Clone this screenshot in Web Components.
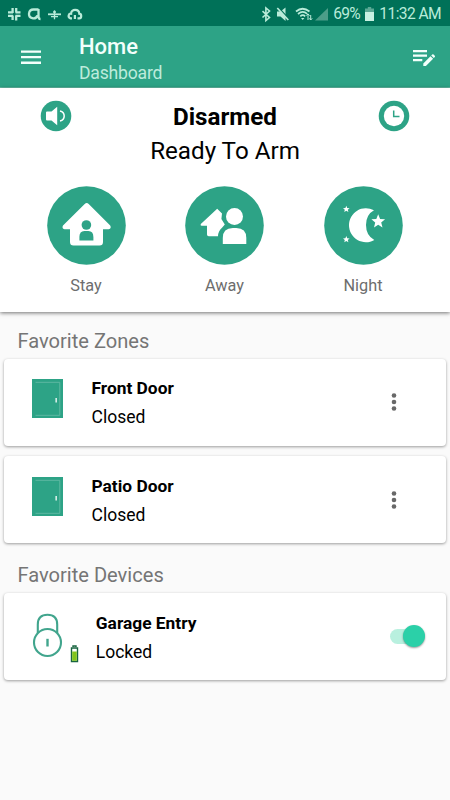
<!DOCTYPE html>
<html lang="en">
<head>
<meta charset="utf-8">
<title>Home - Dashboard</title>
<style>
    body {
        margin: 0;
        background: #fafafa;
        font-family: Roboto, "Liberation Sans", sans-serif;
        --teal: #2da386;
        --teal-dark: #007158;
    }
</style>
</head>
<body>
<security-app></security-app>

<script>
class StatusBar extends HTMLElement {
    constructor() {
        super();
        this.attachShadow({ mode: 'open' });
        this.shadowRoot.innerHTML = `
            <style>
                :host {
                    display: flex;
                    justify-content: space-between;
                    align-items: center;
                    box-sizing: border-box;
                    height: 26px;
                    padding: 1px 9px 0 7px;
                    background: var(--teal-dark);
                    color: #b9ebd9;
                    font-size: 15.6px;
                    line-height: 26px;
                }
                svg { display: block; }
                .group { display: flex; align-items: center; }
                .percent { margin-left: 5px; letter-spacing: -0.8px; }
                .battery { margin-left: 5.5px; }
                .time { margin-left: 5px; letter-spacing: -0.6px; }
            </style>
            <div class="group">
                <svg width="76" height="24" viewBox="0 0 76 24" fill="none" stroke="currentColor" stroke-width="2.3">
                    <path d="M5.600 6v5M9.200 6v4.500M9.200 13.500v5M5.600 13.500v4.500M1 10.300h5M8.500 10.300h5M1 13.900h5M8.500 13.900h5"/>
                    <path d="M31.500 7.500h-5a4.400 4.400 0 1 0 4 6M31.500 7v7.500q0 2.500 2 2.500"/>
                    <path d="M41 12.300h13" stroke-width="1.8"/>
                    <path d="M46 10h3M44 14.700h7" stroke-width="1.3"/>
                    <path d="M47.500 8.300v9" stroke-width="1.3"/>
                    <path d="M65 16.300h-1.700c-3-1.500-1.500-5 .8-4.600 0-5 8-5 8.200 0 2.800.4 2.300 4.600 0 4.600h-1.800M67.900 13v4" stroke-width="2.2"/>
                </svg>
            </div>
            <div class="group">
                <svg width="68" height="24" viewBox="263 1 68 24" fill="none" stroke="currentColor" stroke-width="1.6">
                    <path d="M265.500 10.200l7 6.300-3.600 3V7l3.600 3-7 6.500"/>
                    <path d="M280 10.500h3.500l5-4V20l-5-4.500H280z" fill="currentColor" stroke="none"/>
                    <path d="M281.500 6.500l10.500 11.500" stroke="#007158" stroke-width="1.3"/>
                    <path d="M280.300 7l11 12" stroke-width="1.7"/>
                    <path d="M299 10.500q6.500-5.500 13.500 0M301 13q4.700-4 9.200-.2M303.300 15.300q2.500-2.200 4.900 0" stroke-width="1.7"/>
                    <path d="M304 17h3.400l-1.700 2z" fill="currentColor" stroke="none"/>
                    <path d="M311 13v6M309.500 14.600l1.500-1.700 1.500 1.700M313.700 14v5M312.200 17.300l1.500 1.700 1.500-1.700" stroke-width="1"/>
                    <path d="M331 7v12.500h-13z" fill="#4c9e89" stroke="none"/>
                </svg>
                <span class="percent">69%</span>
                <svg class="battery" width="9" height="14" viewBox="0 0 9 14">
                    <path d="M2.800 0h3.400v1.600H9V14H0V1.600h2.800z" fill="#5ba995"/>
                    <path d="M0 5h9v9H0z" fill="#c7f1e2"/>
                </svg>
                <span class="time">11:32 AM</span>
            </div>
        `;
    }
}

class AppBar extends HTMLElement {
    constructor() {
        super();
        this.attachShadow({ mode: 'open' });
        this.shadowRoot.innerHTML = `
            <style>
                :host {
                    display: flex;
                    align-items: center;
                    box-sizing: border-box;
                    height: 62px;
                    padding: 0 14px 0 20px;
                    background: var(--teal);
                    border-bottom: 1px solid #62bba4;
                    color: #f3fffb;
                }
                svg { display: block; }
                .titles { flex: 1; margin-left: 37px; padding-top: 6px; }
                .title { font-size: 22px; line-height: 26px; font-weight: 500; }
                .subtitle { font-size: 17.6px; line-height: 26px; letter-spacing: -0.2px; color: #bdebdc; }
            </style>
            <svg width="22" height="16" viewBox="0 0 22 16" fill="currentColor">
                <path d="M1 1.400h20v2.300H1zM1 7h20v2.300H1zM1 12.600h20v2.300H1z"/>
            </svg>
            <div class="titles">
                <div class="title"><slot name="title"></slot></div>
                <div class="subtitle"><slot name="subtitle"></slot></div>
            </div>
            <svg width="24" height="18" viewBox="412 48 24 18" fill="currentColor">
                <path d="M413 50h14v2.300h-14zM413 54.500h14v2.300h-14zM413 59h9.300v2.300H413zM423.300 63.400l7.200-7.200 2.600 2.600-7.200 7.200h-2.600zM431.200 55.500l1-1q.7-.6 1.400 0l1.200 1.200q.6.700 0 1.400l-1 1z"/>
            </svg>
        `;
    }
}

class ArmMode extends HTMLElement {
    constructor() {
        super();
        this.attachShadow({ mode: 'open' });
    }

    connectedCallback() {
        this.shadowRoot.innerHTML = `
            <style>
                :host {
                    display: flex;
                    flex-direction: column;
                    align-items: center;
                    width: 79px;
                }
                svg { display: block; }
                .label {
                    margin-top: 10px;
                    font-size: 16.3px;
                    line-height: 22px;
                    color: #6d6d6d;
                    white-space: nowrap;
                }
            </style>
            <svg width="79" height="79" viewBox="0 0 79 79">
                <circle cx="39.5" cy="39.5" r="39.3" fill="#2da386"/>
                ${this.getIcon(this.getAttribute('mode'))}
            </svg>
            <div class="label"><slot></slot></div>
        `;
    }

    getIcon(mode) {
        if (mode === 'stay') {
            return `
                <path d="M39.700 17q1 0 2 1l21.500 21.500q1.500 3-1.500 3.800H56V56q0 3.500-3.500 3.500h-26Q23 59.500 23 56V43.300h-5.500q-3-.8-1.500-3.800L37.700 18q1-1 2-1z" fill="#fff"/>
                <circle cx="39.4" cy="39" r="4.8" fill="#2da386"/>
                <path d="M32.400 54.500V51q0-6 5-6h4q5 0 5 6v3.500z" fill="#2da386"/>
            `;
        }
        if (mode === 'away') {
            return `
                <path d="M32.200 22.700L15.800 38q-.8 1.600.8 1.800H22V48.500q0 1.700 1.700 1.700h9.300q.2-5.500 4-8.500l2.800-3.200-3.400-5.500.6-5.500z" fill="#fff"/>
                <circle cx="49.5" cy="30.4" r="8.5" fill="#fff"/>
                <path d="M37.800 58V52q0-10 10-10h3.500q10 0 10 10v6z" fill="#fff"/>
            `;
        }
        return `
            <path d="M50 24.200A17 17 0 1 0 50.300 54Q42 49.500 42 39T50 24.200z" fill="#fff"/>
            <path d="M54.200 28.300l1.900 4.700 5 .3-3.900 3.200 1.300 4.900-4.300-2.700-4.200 2.700 1.200-4.900-3.800-3.200 4.900-.3z" fill="#fff"/>
            <path d="M22.300 19.800l.9 2.200 2.400.2-1.800 1.500.6 2.300-2.100-1.300-2 1.300.5-2.300-1.800-1.500 2.400-.2zM22.300 50l.9 2.200 2.400.2-1.800 1.500.6 2.300-2.100-1.300-2 1.300.5-2.300-1.800-1.500 2.400-.2z" fill="#fff"/>
        `;
    }
}

class ArmPanel extends HTMLElement {
    constructor() {
        super();
        this.attachShadow({ mode: 'open' });
        this.shadowRoot.innerHTML = `
            <style>
                :host {
                    display: block;
                    box-sizing: border-box;
                    height: 224px;
                    padding-top: 12px;
                    background: #fff;
                    box-shadow: 0 1px 4px rgba(0,0,0,0.55);
                }
                svg { display: block; }
                .status {
                    display: flex;
                    justify-content: space-between;
                    align-items: flex-start;
                    padding: 0 40px;
                }
                .text { text-align: center; color: #000; font-size: 24.2px; }
                .state { line-height: 34px; font-weight: 700; }
                .ready { line-height: 34px; }
                .modes {
                    display: flex;
                    justify-content: space-between;
                    padding: 18px 47.5px 0 46.5px;
                }
            </style>
            <div class="status">
                <svg width="32" height="32" viewBox="0 0 32 32">
                    <circle cx="16" cy="16" r="15.3" fill="#2da386"/>
                    <path d="M7 11.500h4.500l5.700-4.700v18.400l-5.700-4.700H7q-1 0-1-1v-7q0-1 1-1z" fill="#fff"/>
                    <path d="M20 11q4.200 1 4.200 5T20 21" fill="none" stroke="#fff" stroke-width="1.5"/>
                </svg>
                <div class="text">
                    <div class="state"><slot name="state"></slot></div>
                    <div class="ready"><slot name="ready"></slot></div>
                </div>
                <svg width="32" height="32" viewBox="0 0 32 32">
                    <circle cx="16" cy="16" r="15.3" fill="#2da386"/>
                    <circle cx="16" cy="16" r="10.2" fill="#fff"/>
                    <path d="M15.700 10.500v6h5.800" fill="none" stroke="#2da386" stroke-width="1.5"/>
                </svg>
            </div>
            <div class="modes"><slot></slot></div>
        `;
    }
}

class SectionTitle extends HTMLElement {
    constructor() {
        super();
        this.attachShadow({ mode: 'open' });
        this.shadowRoot.innerHTML = `
            <style>
                :host {
                    display: block;
                    padding-left: 17.4px;
                    font-size: 20.1px;
                    line-height: 24px;
                    color: #757575;
                }
            </style>
            <slot></slot>
        `;
    }
}

class ItemCard extends HTMLElement {
    constructor() {
        super();
        this.attachShadow({ mode: 'open' });
        this.shadowRoot.innerHTML = `
            <style>
                :host {
                    display: flex;
                    align-items: center;
                    box-sizing: border-box;
                    height: 87px;
                    margin: 0 4px;
                    border-radius: 4px;
                    background: #fff;
                    box-shadow: 0 1px 3px rgba(0,0,0,0.38);
                    color: #000;
                }
                .icon { flex: none; width: var(--icon-width, 87.5px); }
                .text { flex: 1; padding-top: 2.4px; font-size: 17.5px; line-height: 29px; }
                .name { font-weight: 700; font-size: 17.35px; }
            </style>
            <div class="icon"><slot name="icon"></slot></div>
            <div class="text">
                <div class="name"><slot name="name"></slot></div>
                <div class="value"><slot></slot></div>
            </div>
            <slot name="action"></slot>
        `;
    }
}

class DoorIcon extends HTMLElement {
    constructor() {
        super();
        this.attachShadow({ mode: 'open' });
        this.shadowRoot.innerHTML = `
            <style>
                :host { display: block; padding: 0 0 7px 28px; }
                svg { display: block; }
            </style>
            <svg width="31" height="39" viewBox="0 0 31 39">
                <path d="M0 0h31v39H0z" fill="#2da386"/>
                <path d="M3.500 3.300h24.300v33H3.500" fill="none" stroke="#69bea8" stroke-width=".8"/>
                <path d="M23.500 19h1.300v4.500h-1.300z" fill="#fff"/>
            </svg>
        `;
    }
}

class LockIcon extends HTMLElement {
    constructor() {
        super();
        this.attachShadow({ mode: 'open' });
        this.shadowRoot.innerHTML = `
            <style>
                :host { display: flex; align-items: flex-end; padding: 5px 0 0 28px; }
                svg { display: block; }
                .battery { margin-left: 7px; }
            </style>
            <svg width="31" height="51" viewBox="32 614 31 51" fill="none" stroke="#41a58d" stroke-width="2.1">
                <path d="M37.800 634v-8.500q0-9.800 9.700-9.800t9.700 9.800v8.500"/>
                <circle cx="47.5" cy="643.5" r="13.5"/>
                <path d="M47.500 639.800v7.700" stroke-width="2.4"/>
            </svg>
            <svg class="battery" width="9" height="19" viewBox="0 0 9 19">
                <path d="M3 2V1h3v1M1.500 3h6v13.500h-6z" fill="#fff" stroke="#17643f" stroke-width="1.4"/>
                <path d="M2.200 6.500h4.600v9.300H2.200z" fill="#80c41c"/>
            </svg>
        `;
    }
}

class MoreButton extends HTMLElement {
    constructor() {
        super();
        this.attachShadow({ mode: 'open' });
        this.shadowRoot.innerHTML = `
            <style>
                :host { display: block; margin-right: 48.3px; }
                svg { display: block; }
            </style>
            <svg width="8" height="20" viewBox="0 0 8 20" fill="#686868">
                <circle cx="4" cy="3.5" r="2.3"/>
                <circle cx="4" cy="10" r="2.3"/>
                <circle cx="4" cy="16.5" r="2.3"/>
            </svg>
        `;
    }
}

class ToggleSwitch extends HTMLElement {
    constructor() {
        super();
        this.attachShadow({ mode: 'open' });
        this.shadowRoot.innerHTML = `
            <style>
                :host {
                    display: flex;
                    justify-content: flex-end;
                    align-items: center;
                    width: 35px;
                    height: 15px;
                    margin-right: 21px;
                    border-radius: 8px;
                    background: linear-gradient(to right, #b9f0df 24px, transparent 24px);
                }
                .thumb {
                    flex: none;
                    width: 22px;
                    height: 22px;
                    border-radius: 50%;
                    background: #2bd0a8;
                    box-shadow: 0 1px 2px rgba(0,0,0,0.4);
                }
            </style>
            <div class="thumb"></div>
        `;
    }
}

class SecurityApp extends HTMLElement {
    constructor() {
        super();
        this.attachShadow({ mode: 'open' });
        this.shadowRoot.innerHTML = `
            <style>
                :host { display: block; width: 450px; height: 800px; overflow: hidden; background: #fafafa; }
                .zones { padding-top: 17px; }
                .devices { padding-top: 19.6px; }
                section { display: flex; flex-direction: column; }
                section section-title { margin-bottom: 5.6px; }
                .zones item-card + item-card { margin-top: 10.6px; }
                .devices section-title { margin-bottom: 6.2px; }
                .devices item-card { --icon-width: 91.8px; }
            </style>
            <status-bar></status-bar>
            <app-bar>
                <span slot="title">Home</span>
                <span slot="subtitle">Dashboard</span>
            </app-bar>
            <arm-panel>
                <span slot="state">Disarmed</span>
                <span slot="ready">Ready To Arm</span>
                <arm-mode mode="stay">Stay</arm-mode>
                <arm-mode mode="away">Away</arm-mode>
                <arm-mode mode="night">Night</arm-mode>
            </arm-panel>
            <section class="zones">
                <section-title>Favorite Zones</section-title>
                <item-card>
                    <door-icon slot="icon"></door-icon>
                    <span slot="name">Front Door</span>
                    Closed
                    <more-button slot="action"></more-button>
                </item-card>
                <item-card>
                    <door-icon slot="icon"></door-icon>
                    <span slot="name">Patio Door</span>
                    Closed
                    <more-button slot="action"></more-button>
                </item-card>
            </section>
            <section class="devices">
                <section-title>Favorite Devices</section-title>
                <item-card>
                    <lock-icon slot="icon"></lock-icon>
                    <span slot="name">Garage Entry</span>
                    Locked
                    <toggle-switch slot="action"></toggle-switch>
                </item-card>
            </section>
        `;
    }
}

customElements.define('status-bar', StatusBar);
customElements.define('app-bar', AppBar);
customElements.define('arm-mode', ArmMode);
customElements.define('arm-panel', ArmPanel);
customElements.define('section-title', SectionTitle);
customElements.define('item-card', ItemCard);
customElements.define('door-icon', DoorIcon);
customElements.define('lock-icon', LockIcon);
customElements.define('more-button', MoreButton);
customElements.define('toggle-switch', ToggleSwitch);
customElements.define('security-app', SecurityApp);
</script>
</body>
</html>
